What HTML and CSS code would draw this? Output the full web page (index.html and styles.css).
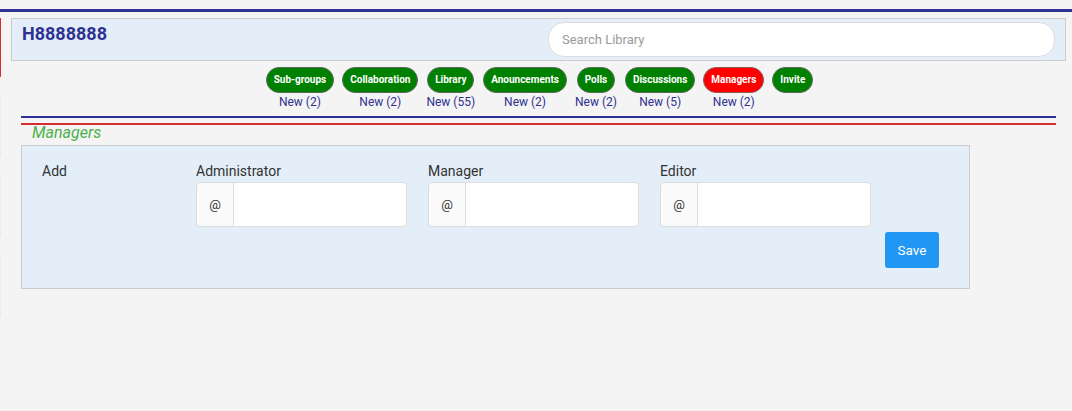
FILE: index.html
```html
<!DOCTYPE html>
<html>
<head>
<meta charset="utf-8">
<link rel="stylesheet" href="styles.css">
</head>
<body>
<div class="topbar"></div>
<div class="layout">
  <div class="rail">
    <div class="rail-red"></div>
    <div class="rail-blue"></div>
    <div class="rail-blue"></div>
    <div class="rail-blue"></div>
  </div>
  <div class="main">
    <header class="header">
      <h1 class="title">H8888888</h1>
      <input class="search" type="text" placeholder="Search Library">
    </header>
    <nav class="tabs">
      <div class="tab"><span class="pill">Sub-groups</span><span class="new">New (2)</span></div>
      <div class="tab"><span class="pill">Collaboration</span><span class="new">New (2)</span></div>
      <div class="tab"><span class="pill">Library</span><span class="new">New (55)</span></div>
      <div class="tab"><span class="pill">Anouncements</span><span class="new">New (2)</span></div>
      <div class="tab"><span class="pill">Polls</span><span class="new">New (2)</span></div>
      <div class="tab"><span class="pill">Discussions</span><span class="new">New (5)</span></div>
      <div class="tab"><span class="pill pill-active">Managers</span><span class="new">New (2)</span></div>
      <div class="tab"><span class="pill">Invite</span></div>
    </nav>
    <div class="section">
      <div class="rule-blue"></div>
      <div class="rule-red"></div>
      <h2 class="section-title">Managers</h2>
      <div class="panel">
        <div class="form-row">
          <div class="add">Add</div>
          <div class="field">
            <label class="label">Administrator</label>
            <div class="group"><span class="addon">@</span><input class="control" type="text"></div>
          </div>
          <div class="field">
            <label class="label">Manager</label>
            <div class="group"><span class="addon">@</span><input class="control" type="text"></div>
          </div>
          <div class="field">
            <label class="label">Editor</label>
            <div class="group"><span class="addon">@</span><input class="control" type="text"></div>
          </div>
        </div>
        <div class="actions"><button class="save">Save</button></div>
      </div>
    </div>
  </div>
</div>
</body>
</html>
```

FILE: styles.css
```css
* { box-sizing: border-box; }
html, body { margin: 0; padding: 0; }
body {
  background: #f4f4f4;
  font-family: Roboto, "Liberation Sans", sans-serif;
  color: #333;
}
.topbar {
  margin-top: 9px;
  height: 3px;
  background: #2e3192;
}
.layout {
  display: flex;
  padding-top: 6px;
}
.rail {
  width: 1px;
  display: flex;
  flex-direction: column;
}
.rail-red {
  height: 59px;
  background: #d32f2f;
}
.rail-blue {
  margin-top: 20px;
  height: 60px;
  background: #e2edf8;
}
.main {
  margin-left: 10px;
  width: 1055px;
}
.header {
  height: 43px;
  background: #e4eef8;
  border: 1px solid #cccccc;
  display: flex;
  justify-content: space-between;
  align-items: flex-start;
  padding: 3px 10px 0 10px;
}
.title {
  margin: 0;
  padding-top: 2px;
  font-size: 18px;
  line-height: 20px;
  font-weight: 700;
  color: #2e3192;
}
.search {
  width: 507px;
  height: 35px;
  border: 1px solid #dddddd;
  border-radius: 16px;
  background: #fff;
  padding: 0 13px;
  font-family: Roboto, "Liberation Sans", sans-serif;
  font-size: 13px;
  outline: none;
}
.search::placeholder { color: #9a9a9a; }
.tabs {
  display: flex;
  justify-content: center;
  gap: 8px;
  margin-top: 6px;
  padding-left: 2px;
}
.tab {
  display: flex;
  flex-direction: column;
  align-items: center;
}
.pill {
  height: 26px;
  line-height: 24px;
  padding: 0 7px;
  border-radius: 13px;
  background: #008000;
  border: 1px solid #5a6b5a;
  color: #fff;
  font-size: 10px;
  font-weight: 700;
  white-space: nowrap;
}
.pill-active {
  background: #ff0000;
  border-color: #8a5a5a;
}
.new {
  margin-top: 2px;
  font-size: 12px;
  line-height: 14px;
  color: #2e3192;
}
.section {
  padding: 0 10px;
}
.rule-blue {
  margin-top: 7px;
  height: 2px;
  background: #2e3192;
}
.rule-red {
  margin-top: 5px;
  height: 2px;
  background: #d32f2f;
}
.section-title {
  margin: -1px 0 3px 11px;
  font-size: 16px;
  line-height: 18px;
  font-style: italic;
  font-weight: 400;
  color: #4cb04c;
}
.panel {
  width: 949px;
  height: 144px;
  background: #e4eef8;
  border: 1px solid #cccccc;
  padding: 15px 30px 0 20px;
}
.form-row {
  display: flex;
}
.add {
  width: 154px;
  font-size: 14px;
  line-height: 20px;
  color: #333;
}
.field {
  width: 211px;
  margin-right: 21px;
  display: flex;
  flex-direction: column;
}
.label {
  font-size: 14px;
  line-height: 20px;
  color: #333;
}
.group {
  margin-top: 1px;
  display: flex;
  height: 45px;
}
.addon {
  width: 37px;
  background: #fafafa;
  border: 1px solid #dddddd;
  border-right: none;
  border-radius: 4px 0 0 4px;
  display: flex;
  align-items: center;
  justify-content: center;
  font-size: 13px;
  color: #333;
}
.control {
  flex: 1;
  min-width: 0;
  border: 1px solid #dddddd;
  border-radius: 0 4px 4px 0;
  background: #fff;
  outline: none;
}
.actions {
  display: flex;
  justify-content: flex-end;
  margin-top: 5px;
}
.save {
  width: 54px;
  height: 36px;
  border: none;
  border-radius: 3px;
  background: #2196f3;
  color: #fff;
  font-family: Roboto, "Liberation Sans", sans-serif;
  font-size: 13.5px;
}
```
